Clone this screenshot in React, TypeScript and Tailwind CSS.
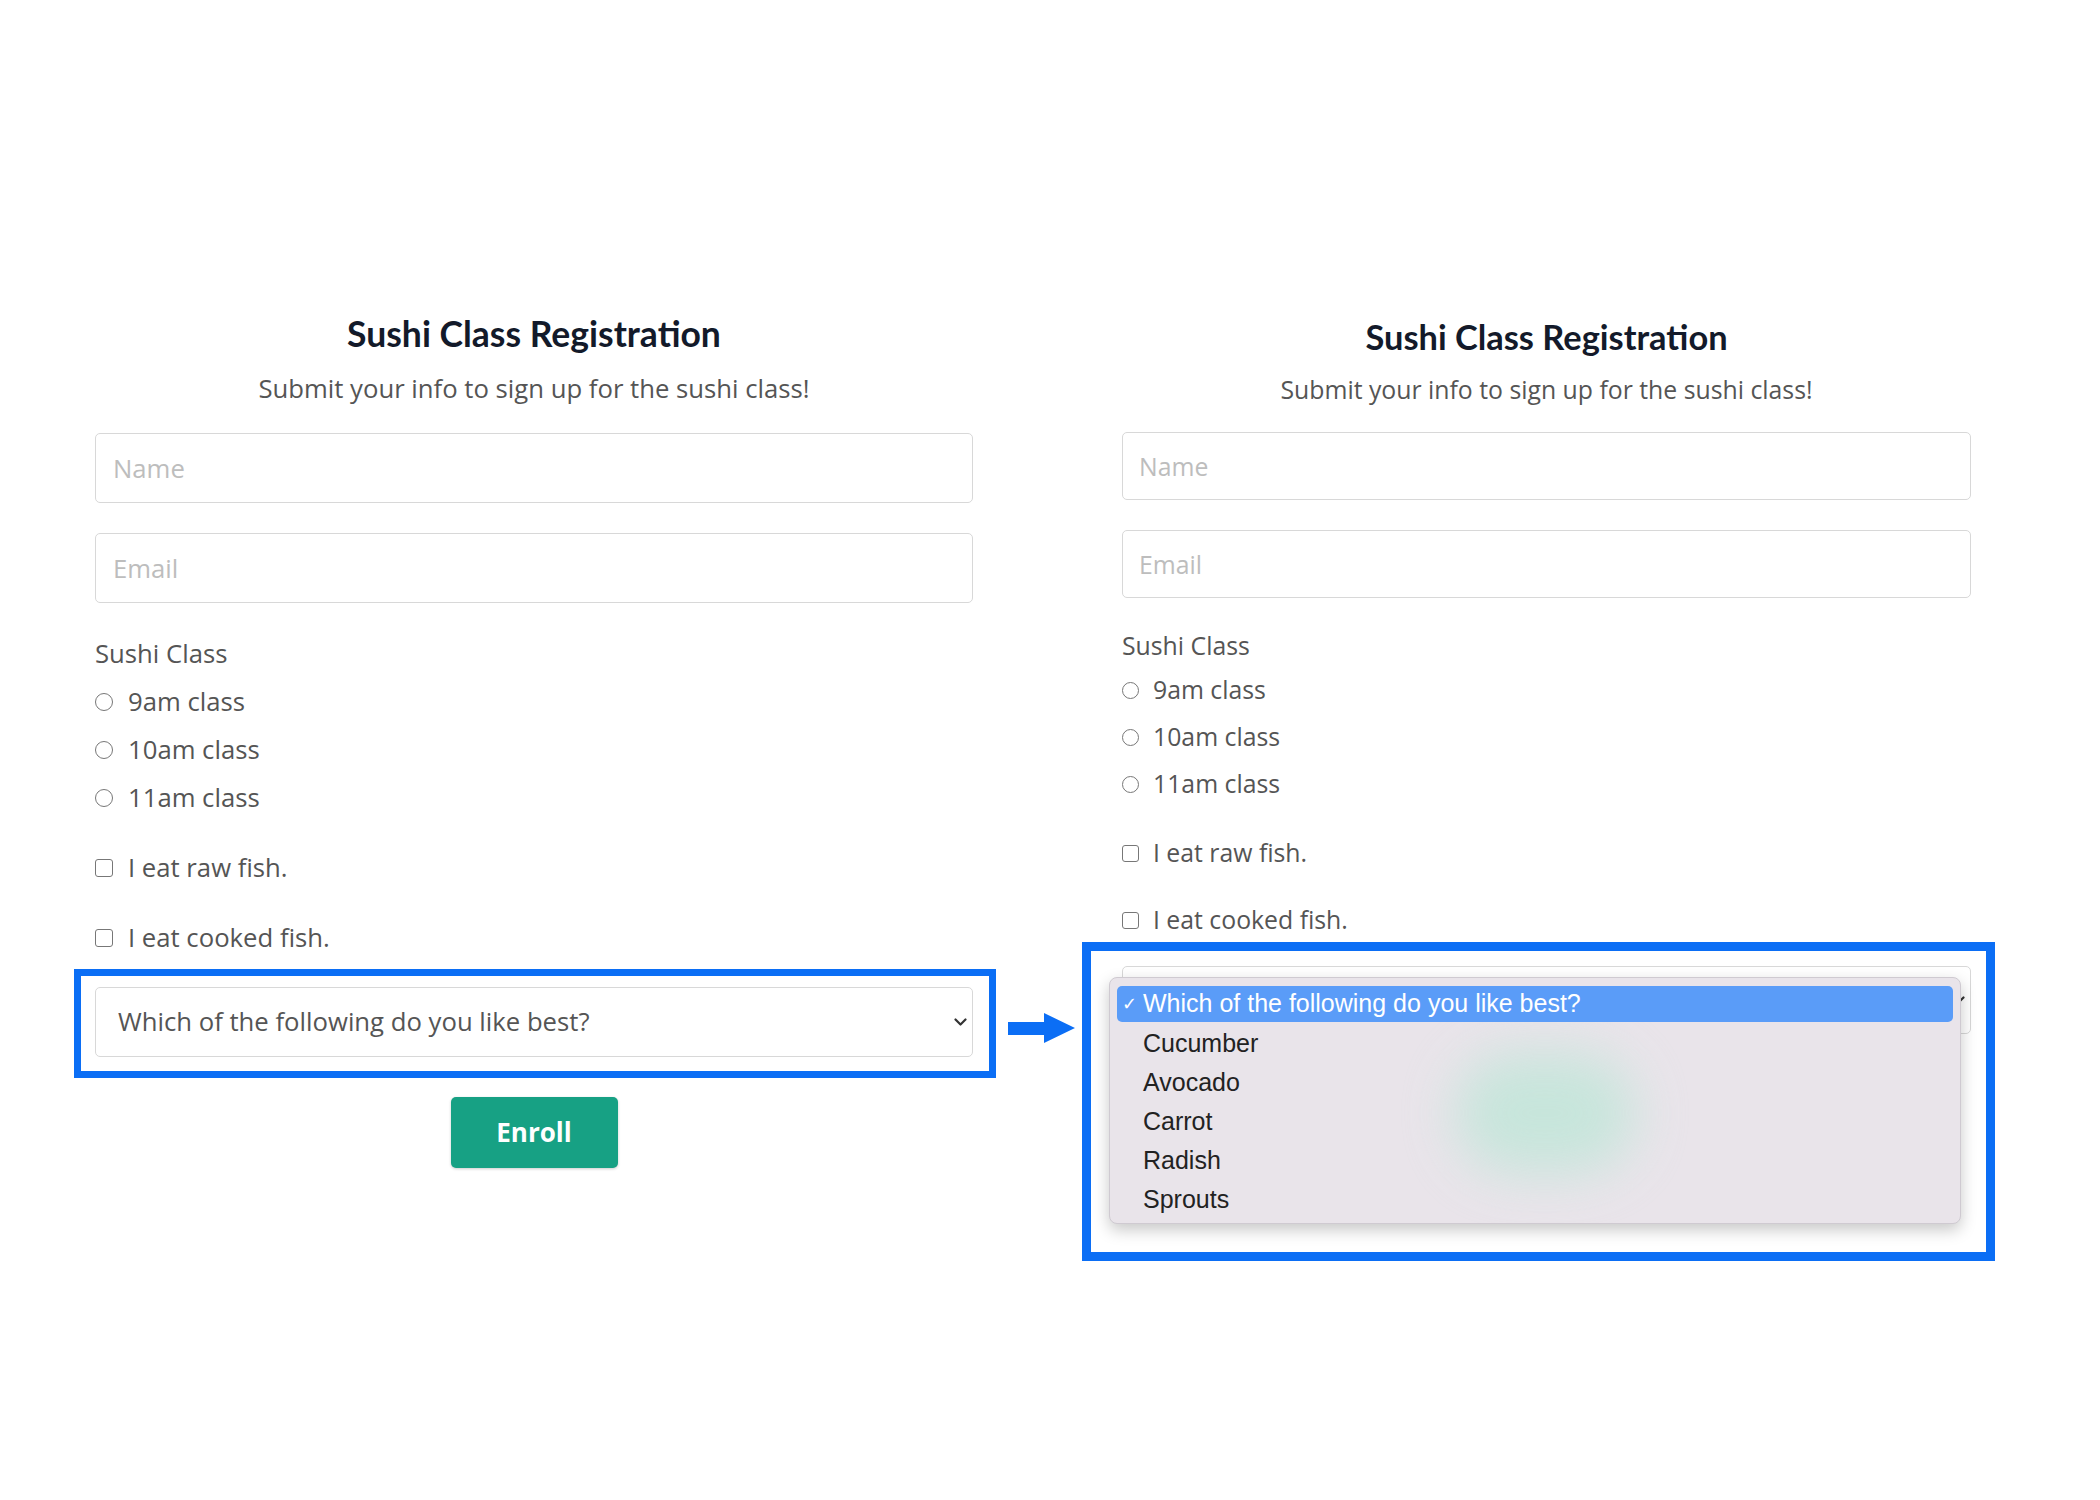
import type { ReactNode } from 'react';

const options = ['Cucumber', 'Avocado', 'Carrot', 'Radish', 'Sprouts'];
const question = 'Which of the following do you like best?';

type Size = {
  col: string;
  title: string;
  subtitle: string;
  input: string;
  label: string;
  radios: string;
  row: string;
  check1: string;
  check2: string;
  radio: string;
  box: string;
};

const left: Size = {
  col: 'w-[878px] pt-[314px]',
  title: 'text-[35.5px] leading-[40px]',
  subtitle: 'mt-[20px] text-[25.7px] leading-[30px]',
  input: 'h-[70px] pl-[17px] text-[25.7px]',
  label: 'mt-[36px] text-[25.7px] leading-[30px]',
  radios: 'mt-[18px] gap-[18px]',
  row: 'h-[30px] gap-[15px] text-[25.7px]',
  check1: 'mt-[40px]',
  check2: 'mt-[40px]',
  radio: 'h-[18px] w-[18px]',
  box: 'mt-[16px]',
};

const right: Size = {
  col: 'w-[849px] pt-[318px]',
  title: 'text-[34.4px] leading-[38px]',
  subtitle: 'mt-[19px] text-[24.8px] leading-[28px]',
  input: 'h-[68px] pl-[16px] text-[24.8px]',
  label: 'mt-[33px] text-[24.8px] leading-[28px]',
  radios: 'mt-[17px] gap-[19px]',
  row: 'h-[28px] gap-[14px] text-[24.8px]',
  check1: 'mt-[41px]',
  check2: 'mt-[39px]',
  radio: 'h-[17px] w-[17px]',
  box: 'mt-[8px]',
};

function Chevron() {
  return (
    <svg width="13" height="8" viewBox="0 0 13 8" className="pointer-events-none absolute right-0 top-1/2 -translate-y-1/2">
      <path d="M1.5 1.5l5 5 5-5" fill="none" stroke="#333" strokeWidth="2.2" strokeLinecap="round" strokeLinejoin="round" />
    </svg>
  );
}

function Select({ s }: { s: Size }) {
  return (
    <div className="relative">
      <select
        defaultValue=""
        className={`block w-full appearance-none rounded-[5px] border border-[#d8d8d8] bg-white pl-[22px] text-[#555] outline-none ${s.input}`}
      >
        <option value="">{question}</option>
        {options.map((o) => (
          <option key={o}>{o}</option>
        ))}
      </select>
      <div className="pointer-events-none absolute right-[6px] top-0 h-full w-[13px]">
        <Chevron />
      </div>
    </div>
  );
}

function Row({ s, type, children }: { s: Size; type: 'radio' | 'checkbox'; children: ReactNode }) {
  return (
    <label className={`flex items-center text-[#555] ${s.row}`}>
      <input
        type={type}
        name={type === 'radio' ? 'sushi-class' : undefined}
        className={`m-0 shrink-0 appearance-none border-[1.5px] border-[#777] bg-white ${s.radio} ${
          type === 'radio' ? 'rounded-full' : 'rounded-[3px]'
        }`}
      />
      <span>{children}</span>
    </label>
  );
}

function Fields({ s }: { s: Size }) {
  return (
    <>
      <h1 className={`text-center font-['Lato',sans-serif] font-bold text-[#131a2a] ${s.title}`}>
        Sushi Class Registration
      </h1>
      <p className={`text-center text-[#555] ${s.subtitle}`}>Submit your info to sign up for the sushi class!</p>
      <input
        placeholder="Name"
        className={`mt-[29px] block w-full rounded-[5px] border border-[#d8d8d8] bg-white outline-none placeholder:text-[#bdbdbd] ${s.input}`}
      />
      <input
        placeholder="Email"
        className={`mt-[30px] block w-full rounded-[5px] border border-[#d8d8d8] bg-white outline-none placeholder:text-[#bdbdbd] ${s.input}`}
      />
      <p className={`text-[#555] ${s.label}`}>Sushi Class</p>
      <div className={`flex flex-col ${s.radios}`}>
        <Row s={s} type="radio">9am class</Row>
        <Row s={s} type="radio">10am class</Row>
        <Row s={s} type="radio">11am class</Row>
      </div>
      <div className={s.check1}>
        <Row s={s} type="checkbox">I eat raw fish.</Row>
      </div>
      <div className={s.check2}>
        <Row s={s} type="checkbox">I eat cooked fish.</Row>
      </div>
    </>
  );
}

function Arrow() {
  return (
    <svg width="68" height="31" viewBox="0 0 68 31" className="absolute left-[calc(100%+19px)] top-[37px]">
      <polygon points="0,9 36,9 36,0 67,15 36,30 36,22 0,22" fill="#0b6ef5" />
    </svg>
  );
}

function Menu() {
  return (
    <div className="absolute left-[18px] top-[26px] h-[247px] w-[852px] overflow-hidden rounded-[8px] border border-[#cfcad1] bg-[#e9e4ea] px-[7px] pt-[8px] font-['Liberation_Sans',Arial,sans-serif] shadow-[0_6px_16px_rgba(0,0,0,0.22)]">
      <div className="pointer-events-none absolute left-[345px] top-[75px] h-[120px] w-[180px] rounded-full bg-[#bfe6d8] opacity-80 blur-[26px]" />
      <div className="relative flex h-[36px] items-center rounded-[5px] bg-[#5a9cf8] text-[25px] text-white">
        <span className="w-[26px] pl-[5px] text-[18px]">✓</span>
        <span>{question}</span>
      </div>
      <ul className="relative mt-[2px]">
        {options.map((o) => (
          <li key={o} className="flex h-[39px] items-center pl-[26px] text-[25px] text-[#222]">
            {o}
          </li>
        ))}
      </ul>
    </div>
  );
}

export default function App() {
  return (
    <div className="min-h-screen w-[2100px] bg-white font-['Open_Sans',sans-serif]">
      <div className="flex items-start pl-[95px]">
        <div className={left.col}>
          <Fields s={left} />
          <div className={`relative -ml-[21px] -mr-[23px] border-[7px] border-[#0b6ef5] pb-[14px] pl-[14px] pr-[16px] pt-[11px] ${left.box}`}>
            <Select s={left} />
            <Arrow />
          </div>
          <button
            type="button"
            className="mx-auto mt-[19px] block h-[71px] w-[167px] rounded-[5px] bg-[#17a184] text-[26px] font-bold text-white shadow-[0_1px_3px_rgba(0,0,0,0.2)]"
          >
            Enroll
          </button>
        </div>

        <div className={`ml-[149px] ${right.col}`}>
          <Fields s={right} />
          <div className={`relative -ml-[40px] -mr-[24px] h-[319px] border-[9px] border-[#0b6ef5] pl-[31px] pr-[15px] pt-[15px] ${right.box}`}>
            <Select s={right} />
            <Menu />
          </div>
        </div>
      </div>
    </div>
  );
}
